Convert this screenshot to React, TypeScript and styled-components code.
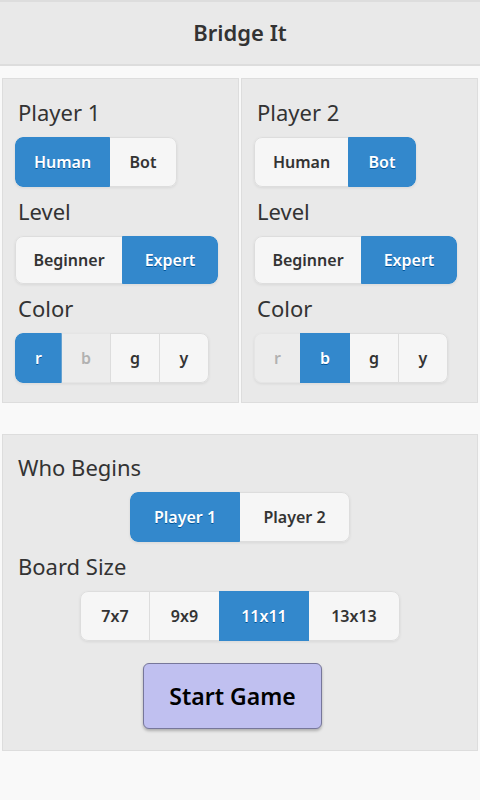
import React, { useState } from "react";
import styled, { createGlobalStyle, css } from "styled-components";

const Global = createGlobalStyle`
  html, body { margin: 0; padding: 0; background: #f9f9f9; }
  body { font-family: "Noto Sans", "Open Sans", sans-serif; color: #333; }
  * { box-sizing: border-box; }
`;

const Page = styled.div`
  width: 480px;
  min-height: 800px;
  background: #f9f9f9;
`;

const Header = styled.header`
  height: 66px;
  background: #e9e9e9;
  border-top: 2px solid #dddddd;
  border-bottom: 2px solid #dddddd;
  display: flex;
  align-items: center;
  justify-content: center;
`;

const Title = styled.h1`
  margin: 0 0 2px;
  font-size: 22px;
  font-weight: 600;
  color: #333;
`;

const PlayersRow = styled.div`
  display: grid;
  grid-template-columns: 1fr 1fr;
  gap: 2px;
  padding: 0 2px;
  margin-top: 12px;
`;

const Panel = styled.section<{ $top?: number; $bottom?: number }>`
  background: #e9e9e9;
  border: 1px solid #dddddd;
  padding: ${(p) => p.$top ?? 20}px 12px ${(p) => p.$bottom ?? 19}px;
  display: flex;
  flex-direction: column;
`;

const GamePanel = styled(Panel)`
  margin: 31px 2px 0;
`;

const Label = styled.div<{ $first?: boolean }>`
  font-size: 22px;
  line-height: 26px;
  font-weight: 400;
  color: #333;
  margin: ${(p) => (p.$first ? "0" : "11px")} 0 12px 3px;
`;

const Group = styled.div<{ $center?: boolean }>`
  display: inline-flex;
  align-self: ${(p) => (p.$center ? "center" : "flex-start")};
  border-radius: 8px;
  overflow: hidden;
  box-shadow: 0 1px 3px rgba(0, 0, 0, 0.08);
`;

const SegButton = styled.button<{ $active?: boolean; $disabled?: boolean; $w?: number; $h?: number }>`
  height: ${(p) => p.$h ?? 50}px;
  padding: 0 20px;
  ${(p) => p.$w && css`width: ${p.$w}px; padding: 0;`}
  font-family: "Noto Sans", "Open Sans", sans-serif;
  font-size: 16px;
  font-weight: 600;
  border: 1px solid #dddddd;
  margin-left: -1px;
  &:first-child { margin-left: 0; border-radius: 8px 0 0 8px; }
  &:last-child { border-radius: 0 8px 8px 0; }
  background: #f6f6f6;
  color: #333;
  text-shadow: 0 1px 0 #f3f3f3;
  cursor: pointer;
  ${(p) =>
    p.$active &&
    css`
      background: #3388cc;
      border-color: #3388cc;
      color: #fff;
      text-shadow: 0 1px 0 #005599;
      position: relative;
    `}
  ${(p) =>
    p.$disabled &&
    css`
      opacity: 0.3;
      cursor: default;
    `}
`;

const StartButton = styled.button`
  align-self: center;
  margin: 22px 15px 0 0;
  width: 179px;
  height: 66px;
  background: #c0c0f0;
  border: 1px solid #77779a;
  border-radius: 6px;
  box-shadow: 0 2px 3px rgba(0, 0, 0, 0.25);
  font-family: "Noto Sans", "Open Sans", sans-serif;
  font-size: 23px;
  font-weight: 600;
  color: #000;
  cursor: pointer;
`;

type Opt = { key: string; label: string; w?: number };

function Segmented({
  options,
  value,
  disabled,
  onChange,
  center,
  height,
}: {
  options: Opt[];
  value: string;
  disabled?: string;
  onChange: (v: string) => void;
  center?: boolean;
  height?: number;
}) {
  return (
    <Group $center={center}>
      {options.map((o) => (
        <SegButton
          key={o.key}
          $w={o.w}
          $h={height}
          $active={o.key === value}
          $disabled={o.key === disabled}
          onClick={() => o.key !== disabled && onChange(o.key)}
        >
          {o.label}
        </SegButton>
      ))}
    </Group>
  );
}

const typeOpts: Opt[] = [
  { key: "human", label: "Human", w: 95 },
  { key: "bot", label: "Bot", w: 68 },
];
const levelOpts: Opt[] = [
  { key: "beginner", label: "Beginner", w: 108 },
  { key: "expert", label: "Expert", w: 96 },
];
const colorOpts: Opt[] = [
  { key: "r", label: "r", w: 47 },
  { key: "b", label: "b", w: 50 },
  { key: "g", label: "g", w: 50 },
  { key: "y", label: "y", w: 50 },
];
const beginOpts: Opt[] = [
  { key: "p1", label: "Player 1", w: 110 },
  { key: "p2", label: "Player 2", w: 111 },
];
const sizeOpts: Opt[] = [
  { key: "7", label: "7x7", w: 70 },
  { key: "9", label: "9x9", w: 71 },
  { key: "11", label: "11x11", w: 90 },
  { key: "13", label: "13x13", w: 92 },
];

function PlayerPanel({
  name,
  type,
  setType,
  level,
  setLevel,
  color,
  setColor,
  otherColor,
}: {
  name: string;
  type: string;
  setType: (v: string) => void;
  level: string;
  setLevel: (v: string) => void;
  color: string;
  setColor: (v: string) => void;
  otherColor: string;
}) {
  return (
    <Panel>
      <Label $first>{name}</Label>
      <Segmented options={typeOpts} value={type} onChange={setType} />
      <Label>Level</Label>
      <Segmented options={levelOpts} value={level} onChange={setLevel} height={48} />
      <Label>Color</Label>
      <Segmented options={colorOpts} value={color} disabled={otherColor} onChange={setColor} />
    </Panel>
  );
}

export default function App() {
  const [t1, setT1] = useState("human");
  const [t2, setT2] = useState("bot");
  const [l1, setL1] = useState("expert");
  const [l2, setL2] = useState("expert");
  const [c1, setC1] = useState("r");
  const [c2, setC2] = useState("b");
  const [begin, setBegin] = useState("p1");
  const [size, setSize] = useState("11");

  return (
    <Page>
      <Global />
      <Header>
        <Title>Bridge It</Title>
      </Header>
      <PlayersRow>
        <PlayerPanel
          name="Player 1"
          type={t1}
          setType={setT1}
          level={l1}
          setLevel={setL1}
          color={c1}
          setColor={setC1}
          otherColor={c2}
        />
        <PlayerPanel
          name="Player 2"
          type={t2}
          setType={setT2}
          level={l2}
          setLevel={setL2}
          color={c2}
          setColor={setC2}
          otherColor={c1}
        />
      </PlayersRow>
      <GamePanel $top={19} $bottom={21}>
        <Label $first>Who Begins</Label>
        <Segmented options={beginOpts} value={begin} onChange={setBegin} center />
        <Label>Board Size</Label>
        <Segmented options={sizeOpts} value={size} onChange={setSize} center />
        <StartButton>Start Game</StartButton>
      </GamePanel>
    </Page>
  );
}
